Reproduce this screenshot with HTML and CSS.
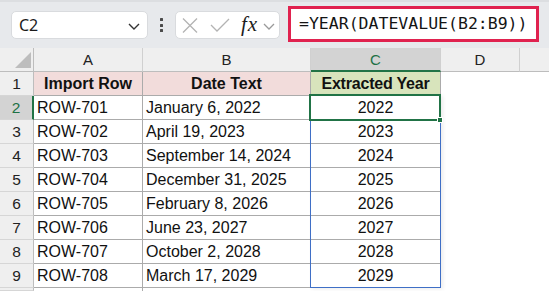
FILE: index.html
```html
<!DOCTYPE html>
<html>
<head>
<meta charset="utf-8">
<link rel="stylesheet" href="styles.css">
</head>
<body>
<div class="toolbar">
  <div class="namebox">
    <span class="ref">C2</span>
    <svg class="chev" width="12" height="7" viewBox="0 0 12 7"><path d="M1 1 L6 6 L11 1" fill="none" stroke="#333" stroke-width="1.4"/></svg>
  </div>
  <div class="dots"><span></span><span></span><span></span></div>
  <div class="fxbox">
    <svg class="ico-x" width="16" height="15" viewBox="0 0 16 15"><path d="M1 0.5 L15 14.5 M15 0.5 L1 14.5" stroke="#b3b3b3" stroke-width="1.3" fill="none"/></svg>
    <svg class="ico-check" width="20" height="14" viewBox="0 0 20 14"><path d="M1 7 L7 13 L19 1" stroke="#b3b3b3" stroke-width="1.3" fill="none"/></svg>
    <span class="fx">fx</span>
    <svg class="chev2" width="12" height="7" viewBox="0 0 12 7"><path d="M1 1 L6 6 L11 1" fill="none" stroke="#9a9a9a" stroke-width="1.3"/></svg>
  </div>
  <div class="formula">=YEAR(DATEVALUE(B2:B9))</div>
</div>
<div class="sheet">
  <div class="corner"><span class="tri"></span></div>
  <div class="hdr">A</div>
  <div class="hdr">B</div>
  <div class="hdr sel">C</div>
  <div class="hdr">D</div>
  <div class="hdr last"></div>

  <div class="rh">1</div>
  <div class="c t1">Import Row</div>
  <div class="c t1">Date Text</div>
  <div class="c t3">Extracted Year</div>
  <div class="e"></div><div class="e"></div>

  <div class="rh sel">2</div>
  <div class="c">ROW-701</div>
  <div class="c">January 6, 2022</div>
  <div class="c num">2022</div>
  <div class="e"></div><div class="e"></div>

  <div class="rh">3</div>
  <div class="c">ROW-702</div>
  <div class="c">April 19, 2023</div>
  <div class="c num">2023</div>
  <div class="e"></div><div class="e"></div>

  <div class="rh">4</div>
  <div class="c">ROW-703</div>
  <div class="c">September 14, 2024</div>
  <div class="c num">2024</div>
  <div class="e"></div><div class="e"></div>

  <div class="rh">5</div>
  <div class="c">ROW-704</div>
  <div class="c">December 31, 2025</div>
  <div class="c num">2025</div>
  <div class="e"></div><div class="e"></div>

  <div class="rh">6</div>
  <div class="c">ROW-705</div>
  <div class="c">February 8, 2026</div>
  <div class="c num">2026</div>
  <div class="e"></div><div class="e"></div>

  <div class="rh">7</div>
  <div class="c">ROW-706</div>
  <div class="c">June 23, 2027</div>
  <div class="c num">2027</div>
  <div class="e"></div><div class="e"></div>

  <div class="rh">8</div>
  <div class="c">ROW-707</div>
  <div class="c">October 2, 2028</div>
  <div class="c num">2028</div>
  <div class="e"></div><div class="e"></div>

  <div class="rh">9</div>
  <div class="c">ROW-708</div>
  <div class="c">March 17, 2029</div>
  <div class="c num">2029</div>
  <div class="e"></div><div class="e"></div>

  <div class="rh"></div>
  <div class="e gl"></div>
  <div class="e"></div>
  <div class="e"></div>
  <div class="e"></div><div class="e"></div>

  <div class="range"></div>
  <div class="selbox"><span class="handle"></span></div>
</div>
</body>
</html>
```

FILE: styles.css
```css
* { box-sizing: border-box; }
html, body { margin: 0; padding: 0; }
body {
  width: 549px;
  height: 291px;
  overflow: hidden;
  background: #ffffff;
  font-family: "Liberation Sans", Arial, sans-serif;
  color: #111;
}

.toolbar {
  height: 48px;
  background: #e7e9ec;
  border-top: 2px solid #dcdee1;
  display: flex;
  align-items: flex-start;
  padding-left: 11px;
}

.namebox {
  margin-top: 9px;
  width: 137px;
  height: 28px;
  background: #fff;
  border: 1px solid #d9dbde;
  border-radius: 5px;
  display: flex;
  align-items: center;
  padding-left: 7px;
  padding-right: 7px;
  justify-content: space-between;
}
.ref {
  font-family: "Noto Sans", "Open Sans", sans-serif;
  font-size: 16px;
  color: #1b1b1b;
}
.chev { margin-top: 2px; }

.dots {
  margin-top: 16px;
  margin-left: 12px;
  margin-right: 12px;
  width: 3px;
  display: flex;
  flex-direction: column;
  gap: 2.5px;
}
.dots span {
  width: 3px;
  height: 3px;
  background: #4a4a4a;
  border-radius: 0.5px;
}

.fxbox {
  margin-top: 9px;
  width: 105px;
  height: 28px;
  background: #fff;
  border: 1px solid #d9dbde;
  border-radius: 5px;
  display: flex;
  align-items: center;
  padding-left: 6px;
}
.ico-check { margin-left: 12px; }
.fx {
  margin-left: 11px;
  font-family: "Liberation Serif", "DejaVu Serif", serif;
  font-style: italic;
  font-size: 21px;
  letter-spacing: 1px;
  color: #1d1d1d;
  line-height: 20px;
  margin-top: -2px;
}
.chev2 { margin-left: 5px; margin-top: 2px; }

.formula {
  margin-top: 4px;
  margin-left: 8px;
  width: 251px;
  height: 36px;
  background: #fff;
  border: 3px solid #e0224f;
  padding-left: 8px;
  font-family: "DejaVu Sans Mono", "Liberation Mono", monospace;
  font-size: 16.5px;
  line-height: 30px;
  color: #141414;
  white-space: nowrap;
}

.sheet {
  position: relative;
  height: 243px;
  overflow: hidden;
  display: grid;
  grid-template-columns: 34px 109px 168px 130px 79px 1fr;
  grid-template-rows: repeat(10, 24px) 3px;
}

.corner {
  background: #efefef;
  border-right: 1px solid #bdbdbd;
  border-bottom: 1px solid #bdbdbd;
  position: relative;
}
.tri {
  position: absolute;
  right: 2px;
  bottom: 3px;
  width: 0;
  height: 0;
  border-left: 16px solid transparent;
  border-bottom: 16px solid #bdbdbd;
}

.hdr {
  background: #efefef;
  border-right: 1px solid #d0d0d0;
  border-bottom: 1px solid #bdbdbd;
  text-align: center;
  font-size: 15px;
  line-height: 23px;
  color: #222;
}
.hdr.sel {
  background: #d3d3d3;
  color: #1e7145;
  border-bottom: 2px solid #217346;
}
.hdr.last { border-right: none; }

.rh {
  background: #efefef;
  border-right: 1px solid #bdbdbd;
  border-bottom: 1px solid #d6d6d6;
  text-align: center;
  font-size: 15.5px;
  line-height: 24px;
  color: #222;
}
.rh.sel {
  background: #d3d3d3;
  color: #1e7145;
  border-right: 2px solid #217346;
}

.c {
  background: #fff;
  border-right: 1px solid #ababab;
  border-bottom: 1px solid #ababab;
  padding-left: 3px;
  font-size: 16px;
  line-height: 24px;
  white-space: nowrap;
  overflow: hidden;
  color: #111;
}
.c.t1 {
  background: #f2dcdb;
  font-weight: bold;
  text-align: center;
  padding-left: 0;
}
.c.t3 {
  background: #d8e4bc;
  font-weight: bold;
  text-align: center;
  padding-left: 0;
  letter-spacing: -0.2px;
}
.c.num {
  text-align: center;
  padding-left: 0;
}

.e { background: #fff; }
.e.gl { border-right: 1px solid #ababab; }

.range {
  position: absolute;
  left: 310px;
  top: 47px;
  width: 131px;
  height: 193px;
  border: 1px solid #3f6fc6;
  box-shadow: 2px 1px 4px rgba(0, 0, 0, 0.08);
  pointer-events: none;
}
.selbox {
  position: absolute;
  left: 309px;
  top: 46px;
  width: 132px;
  height: 27px;
  border: 2px solid #217346;
}
.handle {
  position: absolute;
  right: -4px;
  bottom: -4px;
  width: 6px;
  height: 6px;
  background: #217346;
  border: 1px solid #fff;
}
```
